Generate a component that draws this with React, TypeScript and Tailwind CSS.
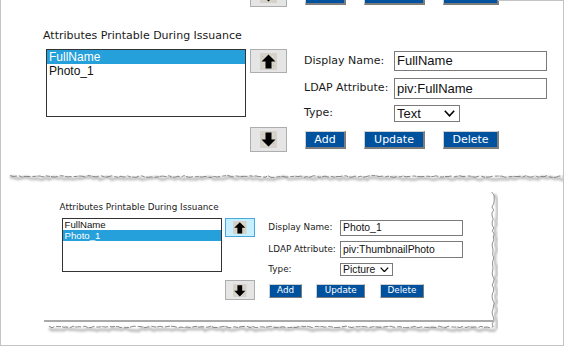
import React from "react";

function rng(seed: number) {
  let s = seed;
  return () => {
    s = (s * 16807) % 2147483647;
    return s / 2147483647;
  };
}

function jag(a0: number, a1: number, c: number, amp: number, seed: number, vertical = false, step = 3) {
  const r = rng(seed);
  const pts: string[] = [];
  for (let t = a0; t <= a1; t += step) {
    const d = (r() - 0.5) * 2 * amp;
    pts.push(vertical ? `${(c + d).toFixed(2)},${t}` : `${t},${(c + d).toFixed(2)}`);
  }
  return pts.join(" ");
}

function ArrowBtn({ dir, hover = false }: { dir: "up" | "down"; hover?: boolean }) {
  const d =
    dir === "up"
      ? "M8.5 1.5 L15.5 8.5 L11.5 8.5 L11.5 15.5 L5.5 15.5 L5.5 8.5 L1.5 8.5 Z"
      : "M8.5 15.5 L15.5 8.5 L11.5 8.5 L11.5 1.5 L5.5 1.5 L5.5 8.5 L1.5 8.5 Z";
  return (
    <div
      className={
        "flex w-[37px] items-center justify-center border " +
        (hover ? "border-[#4aa8e0] bg-[#c6f0ff] " : "border-[#adadad] bg-[#e5e5e5] ") +
        (dir === "up" ? "h-[24px]" : "h-[25px]")
      }
    >
      <svg width="17" height="17" viewBox="0 0 17 17">
        <rect width="17" height="17" fill="#d6d2c9" />
        <rect x="2" y="3" width="1" height="1" fill="#bdb8ad" />
        <rect x="13" y="12" width="1" height="1" fill="#bdb8ad" />
        <rect x="4" y="13" width="1" height="1" fill="#e8e5de" />
        <rect x="12" y="3" width="1" height="1" fill="#e8e5de" />
        <path d={d} fill="#000" />
      </svg>
    </div>
  );
}

const btnCls =
  "flex h-[18px] items-center justify-center border-t border-l border-r-2 border-b-2 border-t-[#d0d0d0] border-l-[#d0d0d0] border-r-[#7c7c7c] border-b-[#7c7c7c] bg-[#00529f] font-['DejaVu_Sans',sans-serif] text-[11px] leading-none text-white";

function ActionButtons({ labels = true }: { labels?: boolean }) {
  return (
    <div className="flex gap-[18px]">
      <div className={btnCls + " w-[41px]"}>{labels ? "Add" : null}</div>
      <div className={btnCls + " w-[61px]"}>{labels ? "Update" : null}</div>
      <div className={btnCls + " w-[56px]"}>{labels ? "Delete" : null}</div>
    </div>
  );
}

function Editor({
  selected,
  name,
  ldap,
  type,
  hoverUp = false,
}: {
  selected: number;
  name: string;
  ldap: string;
  type: string;
  hoverUp?: boolean;
}) {
  const items = ["FullName", "Photo_1"];
  const label = "w-[90px] font-['DejaVu_Sans',sans-serif] text-[11px] text-[#1a1a1a]";
  const input =
    "flex w-[153px] items-center border border-[#7a7a7a] bg-white pl-[2px] font-['Liberation_Sans',Arial,sans-serif] text-[13px] text-[#111]";
  return (
    <div className="pl-[42px]">
      <div className="h-[14px] font-['DejaVu_Sans',sans-serif] text-[11px] leading-[14px] text-[#1a1a1a]">
        Attributes Printable During Issuance
      </div>
      <div className="mt-[6px] flex">
        <div className="ml-[3px] h-[68px] w-[200px] border border-[#333] bg-white font-['Liberation_Sans',Arial,sans-serif] text-[12px] leading-[14px]">
          {items.map((it, i) => (
            <div
              key={it}
              className={
                "h-[14px] pl-[2px] " + (i === selected ? "bg-[#26a0da] text-white" : "text-[#111]")
              }
            >
              {it}
            </div>
          ))}
        </div>
        <div className="ml-[4px] flex h-[103px] w-[37px] flex-col justify-between">
          <ArrowBtn dir="up" hover={hoverUp} />
          <ArrowBtn dir="down" />
        </div>
        <div className="ml-[17px] mt-[2px] flex flex-col">
          <div className="flex h-[20px] items-center">
            <div className={label}>Display Name:</div>
            <div className={input + " h-[20px]"}>{name}</div>
          </div>
          <div className="mt-[7px] flex h-[21px] items-center">
            <div className={label}>LDAP Attribute:</div>
            <div className={input + " h-[21px]"}>{ldap}</div>
          </div>
          <div className="mt-[6px] flex h-[17px] items-center">
            <div className={label}>Type:</div>
            <div className="flex h-[17px] w-[66px] items-center justify-between border border-[#7a7a7a] bg-white pl-[2px] pr-[4px] font-['Liberation_Sans',Arial,sans-serif] text-[13px] text-[#111]">
              <span>{type}</span>
              <svg width="11" height="7" viewBox="0 0 11 7">
                <path d="M0.8 0.8 L5.5 5.8 L10.2 0.8" fill="none" stroke="#000" strokeWidth="1.6" />
              </svg>
            </div>
          </div>
          <div className="ml-[1px] mt-[9px]">
            <ActionButtons />
          </div>
        </div>
      </div>
    </div>
  );
}

export default function App() {
  const topLine = jag(9, 564, 176.5, 0.9, 11);
  const topShadow = jag(9, 564, 178.5, 1.2, 23);
  const rightLine = jag(192, 329, 492, 1.3, 37, true);
  const rightShadow = jag(194, 331, 495, 1.6, 41, true);
  const botLine = jag(48, 494, 327, 0.9, 53);
  const botShadow = jag(48, 496, 329.5, 1.2, 67);
  return (
    <div className="relative h-[346px] w-[564px] overflow-hidden border-x border-b border-[#c4c4c4] bg-white">
      <div className="absolute right-0 top-0 h-px w-[65px] bg-[#c4c4c4]" />
      <div className="h-[176px] overflow-hidden">
        <div className="-mt-[18px] flex pl-[249px]">
          <ArrowBtn dir="down" />
          <div className="ml-[18px] mt-[5px]">
            <ActionButtons labels={false} />
          </div>
        </div>
        <div className="mt-[22px]">
          <Editor selected={0} name="FullName" ldap="piv:FullName" type="Text" />
        </div>
      </div>
      <div className="pl-[25px] pt-[26px]">
        <div className="[zoom:0.8]">
          <Editor selected={1} name="Photo_1" ldap="piv:ThumbnailPhoto" type="Picture" hoverUp />
        </div>
        <div className="ml-[18px] mt-[20px] h-[2px] w-[449px] bg-[#a9a9a9]" />
      </div>
      <svg className="pointer-events-none absolute left-0 top-0" width="564" height="346">
        <defs>
          <filter id="blur" x="-10%" y="-200%" width="120%" height="500%">
            <feGaussianBlur stdDeviation="1.3" />
          </filter>
        </defs>
        <polyline points={topShadow} fill="none" stroke="#8c8c8c" strokeWidth="3" opacity="0.55" filter="url(#blur)" />
        <polyline points={topLine} fill="none" stroke="#777" strokeWidth="1" opacity="0.85" strokeDasharray="7 2 4 1" />
        <polyline points={rightShadow} fill="none" stroke="#8c8c8c" strokeWidth="3" opacity="0.55" filter="url(#blur)" />
        <polyline points={rightLine} fill="none" stroke="#777" strokeWidth="1" opacity="0.8" />
        <polyline points={botShadow} fill="none" stroke="#8c8c8c" strokeWidth="3" opacity="0.55" filter="url(#blur)" />
        <polyline points={botLine} fill="none" stroke="#777" strokeWidth="1" opacity="0.85" strokeDasharray="6 2 5 1" />
      </svg>
    </div>
  );
}
